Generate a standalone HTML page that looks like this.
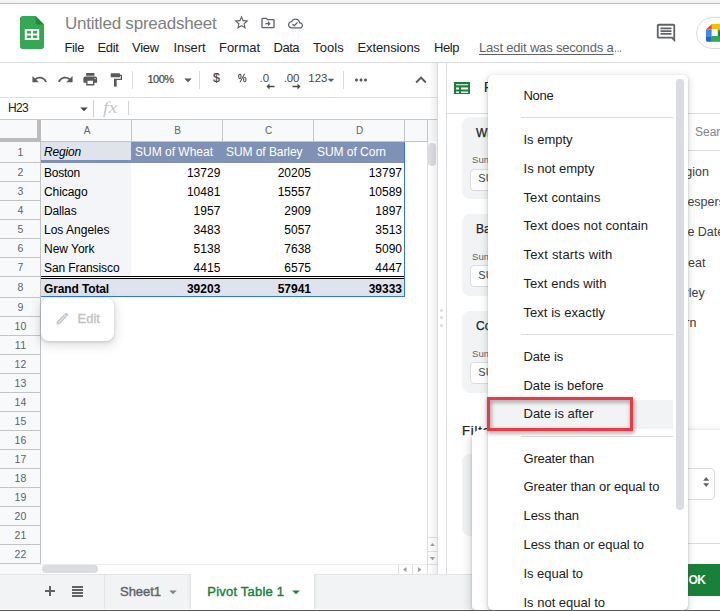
<!DOCTYPE html>
<html>
<head>
<meta charset="utf-8">
<title>Untitled spreadsheet</title>
<style>
*{box-sizing:border-box;margin:0;padding:0}
html,body{width:720px;height:611px;overflow:hidden;background:#fff}
body{position:relative;font-family:"Liberation Sans",sans-serif;color:#202124}
.abs{position:absolute}
.t{position:absolute;white-space:nowrap;line-height:1}
</style>
</head>
<body>
<!-- header -->
<div class="abs" style="left:0px;top:0px;width:720px;height:3px;background:#f5f5f5;"></div>
<div class="abs" style="left:0px;top:3px;width:720px;height:1px;background:#c2c2c2;"></div>
<svg class="abs" style="left:20px;top:16px" width="24" height="33" viewBox="0 0 24 33">
<path d="M2.500 0H15.600L24 8.600V30.500c0 1.400-1.100 2.500-2.500 2.500h-19C1.100 33 0 31.900 0 30.500v-28C0 1.100 1.100 0 2.500 0z" fill="#34a853"/>
<path d="M15.600 0L24 8.600h-6.400c-1.100 0-2-.9-2-2z" fill="#1e8e3e"/>
<path d="M4.800 13v11h14.400V13zm2 2h4.300v2.600H6.800zm6.100 0h4.300v2.600h-4.300zm-6.100 4.400h4.300V22H6.800zm6.100 0h4.300V22h-4.300z" fill="#fff"/>
</svg>
<div class="t" style="left:65px;top:14.5px;font-size:17px;color:#808080;letter-spacing:-0.222px;">Untitled spreadsheet</div>
<svg class="abs" style="left:232.8px;top:14.2px;" width="17" height="17" viewBox="0 0 24 24"><path fill="#5f6368" d="M22 9.24l-7.19-.62L12 2 9.19 8.63 2 9.24l5.46 4.73L5.82 21 12 17.27 18.18 21l-1.63-7.03L22 9.24zM12 15.4l-3.76 2.27 1-4.28-3.32-2.88 4.38-.38L12 6.1l1.71 4.04 4.38.38-3.32 2.88 1 4.28L12 15.4z"/></svg>
<svg class="abs" style="left:260px;top:14.5px;" width="16" height="16" viewBox="0 0 24 24"><path fill="#5f6368" d="M20 6h-8l-2-2H4c-1.1 0-2 .9-2 2v12c0 1.1.9 2 2 2h16c1.1 0 2-.9 2-2V8c0-1.1-.9-2-2-2zm0 12H4V6h5.17l2 2H20v10zm-8-1l4-4-4-4v3H8v2h4v3z"/></svg>
<svg class="abs" style="left:287.5px;top:15.5px;" width="15" height="15" viewBox="0 0 24 24"><path fill="#5f6368" d="M19.35 10.04C18.67 6.59 15.64 4 12 4 9.11 4 6.6 5.64 5.35 8.04 2.34 8.36 0 10.91 0 14c0 3.31 2.69 6 6 6h13c2.76 0 5-2.24 5-5 0-2.64-2.05-4.78-4.65-4.96zM19 18H6c-2.21 0-4-1.79-4-4 0-2.05 1.53-3.76 3.56-3.97l1.07-.11.5-.95C8.08 7.14 9.94 6 12 6c2.62 0 4.88 1.86 5.39 4.43l.3 1.5 1.53.11c1.56.1 2.78 1.41 2.78 2.96 0 1.65-1.35 3-3 3zm-9-3.82l-2.09-2.09L6.5 13.5 10 17l6.01-6.01-1.41-1.41z"/></svg>
<div class="t" style="left:64.5px;top:40.7px;font-size:13px;color:#202124;letter-spacing:-0.362px;">File</div>
<div class="t" style="left:97.5px;top:40.7px;font-size:13px;color:#202124;letter-spacing:-0.350px;">Edit</div>
<div class="t" style="left:132px;top:40.7px;font-size:13px;color:#202124;letter-spacing:-0.236px;">View</div>
<div class="t" style="left:173.5px;top:40.7px;font-size:13px;color:#202124;letter-spacing:-0.085px;">Insert</div>
<div class="t" style="left:219px;top:40.7px;font-size:13px;color:#202124;letter-spacing:-0.029px;">Format</div>
<div class="t" style="left:273.5px;top:40.7px;font-size:13px;color:#202124;letter-spacing:-0.490px;">Data</div>
<div class="t" style="left:313px;top:40.7px;font-size:13px;color:#202124;letter-spacing:0.130px;">Tools</div>
<div class="t" style="left:357.5px;top:40.7px;font-size:13px;color:#202124;letter-spacing:-0.109px;">Extensions</div>
<div class="t" style="left:434px;top:40.7px;font-size:13px;color:#202124;letter-spacing:-0.434px;">Help</div>
<div class="t" style="left:479px;top:40.7px;font-size:13px;color:#5f6368;letter-spacing:-0.185px;text-decoration:underline;text-decoration-thickness:1px;text-underline-offset:2px;">Last edit was seconds a</div>
<div class="t" style="left:613.5px;top:40.7px;font-size:13px;color:#5f6368;transform:scaleX(.62);transform-origin:left;">…</div>
<svg class="abs" style="left:655px;top:21.5px;" width="22" height="22" viewBox="0 0 24 24"><path fill="#5f6368" d="M21.99 4c0-1.1-.89-2-1.99-2H4c-1.1 0-2 .9-2 2v12c0 1.1.9 2 2 2h14l4 4-.01-18zM20 4v13.17L18.83 16H4V4h16zM6 12h12v2H6zm0-3h12v2H6zm0-3h12v2H6z"/></svg>
<div class="abs" style="left:696px;top:17px;width:60px;height:32px;border:1px solid #dadce0;border-radius:16px;background:#fff"></div>
<svg class="abs" style="left:706px;top:24px" width="14" height="18" viewBox="0 0 14 18">
<path d="M5.800 0L0 5.500h5.800z" fill="#ea4335"/>
<path d="M5.800 0H14v5.500H5.800z" fill="#fbbc04"/>
<path d="M0 5.500h5.800v6.700H0z" fill="#4285f4"/>
<path d="M0 12.200h5.800v5.600H1.500C.7 17.800 0 17.100 0 16.300z" fill="#1967d2"/>
<path d="M5.800 12H14v5.800H5.800z" fill="#34a853"/>
<path d="M11.500 5.500H14V12h-2.500z" fill="#34a853"/>
<path d="M5.800 5.500h5.700V12H5.800z" fill="#fff"/>
<path d="M12.500 8.300L14 7v5h-1.500z" fill="#188038"/>
</svg>
<div class="abs" style="left:0px;top:62px;width:720px;height:1px;background:#dadce0;"></div>
<!-- toolbar -->
<svg class="abs" style="left:30.6px;top:71px;" width="17" height="17" viewBox="0 0 24 24"><path fill="#585a5c" d="M12.5 8c-2.65 0-5.05.99-6.9 2.6L2 7v9h9l-3.62-3.62c1.39-1.16 3.16-1.88 5.12-1.88 3.54 0 6.55 2.31 7.6 5.5l2.37-.78C21.08 11.03 17.15 8 12.5 8z"/></svg>
<svg class="abs" style="left:56.8px;top:71px;" width="17" height="17" viewBox="0 0 24 24"><path fill="#585a5c" d="M18.4 10.6C16.55 8.99 14.15 8 11.5 8c-4.65 0-8.58 3.03-9.96 7.22L3.9 16c1.05-3.19 4.05-5.5 7.6-5.5 1.95 0 3.73.72 5.12 1.88L13 16h9V7l-3.6 3.6z"/></svg>
<svg class="abs" style="left:82.2px;top:71px;" width="16.5" height="16.5" viewBox="0 0 24 24"><path fill="#585a5c" d="M19 8H5c-1.66 0-3 1.34-3 3v6h4v4h12v-4h4v-6c0-1.66-1.34-3-3-3zm-3 11H8v-5h8v5zm3-7c-.55 0-1-.45-1-1s.45-1 1-1 1 .45 1 1-.45 1-1 1zm-1-9H6v4h12V3z"/></svg>
<svg class="abs" style="left:108px;top:71.5px;" width="16" height="16" viewBox="0 0 24 24"><path fill="#585a5c" d="M18 4V3c0-.55-.45-1-1-1H5c-.55 0-1 .45-1 1v4c0 .55.45 1 1 1h12c.55 0 1-.45 1-1V6h1v4H9v11c0 .55.45 1 1 1h2c.55 0 1-.45 1-1v-9h8V4h-3z"/></svg>
<div class="abs" style="left:132px;top:71px;width:1px;height:18px;background:#dadce0;"></div>
<div class="t" style="left:147.5px;top:73.7px;font-size:11px;color:#444746;letter-spacing:-0.533px;-webkit-text-stroke:.2px #444746;">100%</div>
<svg class="abs" style="left:179px;top:71px;" width="18" height="18" viewBox="0 0 24 24"><path fill="#585a5c" d="M7 10l5 5 5-5z"/></svg>
<div class="abs" style="left:199px;top:71px;width:1px;height:18px;background:#dadce0;"></div>
<div class="t" style="left:213px;top:72.35px;font-size:12.5px;color:#444746;-webkit-text-stroke:.2px #444746;">$</div>
<div class="t" style="left:237.5px;top:73.05px;font-size:11.5px;color:#444746;transform:scaleX(.84);transform-origin:left;-webkit-text-stroke:.3px #444746;">%</div>
<div class="t" style="left:259.5px;top:73.25px;font-size:11.5px;color:#444746;letter-spacing:-0.045px;">.0</div>
<svg class="abs" style="left:265.500px;top:82.500px" width="9" height="7" viewBox="0 0 9 7"><path d="M3.500 0.500L0.500 3.500l3 3V4.200h5V2.800h-5z" fill="#444746"/></svg>
<div class="t" style="left:283.7px;top:73.25px;font-size:11.5px;color:#444746;letter-spacing:-0.162px;">.00</div>
<svg class="abs" style="left:292.300px;top:82.500px" width="9" height="7" viewBox="0 0 9 7"><path d="M5.500 0.500L8.500 3.500l-3 3V4.200h-5V2.800h5z" fill="#444746"/></svg>
<div class="t" style="left:308.3px;top:73.35px;font-size:11.5px;color:#444746;letter-spacing:-0.062px;">123</div>
<svg class="abs" style="left:323.3px;top:71.5px;" width="16" height="16" viewBox="0 0 24 24"><path fill="#585a5c" d="M7 10l5 5 5-5z"/></svg>
<div class="abs" style="left:343px;top:71px;width:1px;height:18px;background:#dadce0;"></div>
<svg class="abs" style="left:352px;top:70.8px;" width="18" height="18" viewBox="0 0 24 24"><path fill="#585a5c" d="M6 10c-1.1 0-2 .9-2 2s.9 2 2 2 2-.9 2-2-.9-2-2-2zm12 0c-1.1 0-2 .9-2 2s.9 2 2 2 2-.9 2-2-.9-2-2-2zm-6 0c-1.1 0-2 .9-2 2s.9 2 2 2 2-.9 2-2-.9-2-2-2z"/></svg>
<svg class="abs" style="left:409.5px;top:69.1px;" width="22" height="22" viewBox="0 0 24 24"><path fill="#585a5c" d="M12 8l-6 6 1.41 1.41L12 10.83l4.59 4.58L18 14z"/></svg>
<div class="abs" style="left:0px;top:97px;width:437px;height:1px;background:#e0e0e0;"></div>
<div class="abs" style="left:437px;top:63px;width:1px;height:511px;background:#dcdcdc;"></div>
<div class="t" style="left:8px;top:101.6px;font-size:12px;color:#202124;letter-spacing:-0.671px;">H23</div>
<svg class="abs" style="left:75px;top:100px;" width="18" height="18" viewBox="0 0 24 24"><path fill="#444746" d="M7 10l5 5 5-5z"/></svg>
<div class="abs" style="left:93px;top:100px;width:1px;height:17px;background:#d0d0d0;"></div>
<div class="t" style="left:103px;top:99.500px;font-family:'Liberation Serif',serif;font-style:italic;font-size:16.500px;color:#c6c8ca;transform:scaleX(1.22);transform-origin:left">fx</div>
<div class="abs" style="left:128px;top:101px;width:1px;height:14px;background:#d4d4d4;"></div>
<div class="abs" style="left:0px;top:119px;width:437px;height:1px;background:#c4c7c5;"></div>
<!-- grid -->
<div class="abs" style="left:0px;top:120px;width:436px;height:454px;background:#fff;"></div>
<div class="abs" style="left:0px;top:120px;width:437px;height:21px;background:#f8f9fa;"></div>
<div class="abs" style="left:0px;top:141px;width:428px;height:1px;background:#c4c4c4;"></div>
<div class="abs" style="left:131px;top:120px;width:1px;height:21px;background:#c4c4c4;"></div>
<div class="t" style="left:83.765px;top:126.1px;font-size:10px;color:#5f6368;">A</div>
<div class="abs" style="left:222px;top:120px;width:1px;height:21px;background:#c4c4c4;"></div>
<div class="t" style="left:174.265px;top:126.1px;font-size:10px;color:#5f6368;">B</div>
<div class="abs" style="left:313px;top:120px;width:1px;height:21px;background:#c4c4c4;"></div>
<div class="t" style="left:264.989px;top:126.1px;font-size:10px;color:#5f6368;">C</div>
<div class="abs" style="left:404px;top:120px;width:1px;height:21px;background:#c4c4c4;"></div>
<div class="t" style="left:355.989px;top:126.1px;font-size:10px;color:#5f6368;">D</div>
<div class="abs" style="left:427px;top:120px;width:1px;height:21px;background:#c4c4c4;"></div>
<div class="abs" style="left:37px;top:120px;width:4px;height:22px;background:#bcbcbc;"></div>
<div class="abs" style="left:0px;top:138px;width:41px;height:4px;background:#bcbcbc;"></div>
<div class="abs" style="left:0px;top:142px;width:40px;height:421px;background:#f8f9fa;"></div>
<div class="abs" style="left:40px;top:142px;width:1px;height:432px;background:#c4c4c4;"></div>
<div class="abs" style="left:0px;top:162px;width:40px;height:1px;background:#c4c4c4;"></div>
<div class="t" style="left:17.5802px;top:147.25px;font-size:10.5px;color:#5f6368;letter-spacing:.3px;">1</div>
<div class="abs" style="left:0px;top:181px;width:40px;height:1px;background:#c4c4c4;"></div>
<div class="t" style="left:17.5802px;top:167.25px;font-size:10.5px;color:#5f6368;letter-spacing:.3px;">2</div>
<div class="abs" style="left:0px;top:200px;width:40px;height:1px;background:#c4c4c4;"></div>
<div class="t" style="left:17.5802px;top:186.25px;font-size:10.5px;color:#5f6368;letter-spacing:.3px;">3</div>
<div class="abs" style="left:0px;top:219px;width:40px;height:1px;background:#c4c4c4;"></div>
<div class="t" style="left:17.5802px;top:205.25px;font-size:10.5px;color:#5f6368;letter-spacing:.3px;">4</div>
<div class="abs" style="left:0px;top:238px;width:40px;height:1px;background:#c4c4c4;"></div>
<div class="t" style="left:17.5802px;top:224.25px;font-size:10.5px;color:#5f6368;letter-spacing:.3px;">5</div>
<div class="abs" style="left:0px;top:257px;width:40px;height:1px;background:#c4c4c4;"></div>
<div class="t" style="left:17.5802px;top:243.25px;font-size:10.5px;color:#5f6368;letter-spacing:.3px;">6</div>
<div class="abs" style="left:0px;top:276px;width:40px;height:1px;background:#c4c4c4;"></div>
<div class="t" style="left:17.5802px;top:262.25px;font-size:10.5px;color:#5f6368;letter-spacing:.3px;">7</div>
<div class="abs" style="left:0px;top:297px;width:40px;height:1px;background:#c4c4c4;"></div>
<div class="t" style="left:17.5802px;top:282.25px;font-size:10.5px;color:#5f6368;letter-spacing:.3px;">8</div>
<div class="abs" style="left:0px;top:316px;width:40px;height:1px;background:#c4c4c4;"></div>
<div class="t" style="left:17.5802px;top:302.25px;font-size:10.5px;color:#5f6368;letter-spacing:.3px;">9</div>
<div class="abs" style="left:0px;top:335px;width:40px;height:1px;background:#c4c4c4;"></div>
<div class="t" style="left:14.4604px;top:321.25px;font-size:10.5px;color:#5f6368;letter-spacing:.3px;">10</div>
<div class="abs" style="left:0px;top:354px;width:40px;height:1px;background:#c4c4c4;"></div>
<div class="t" style="left:14.85px;top:340.25px;font-size:10.5px;color:#5f6368;letter-spacing:.3px;">11</div>
<div class="abs" style="left:0px;top:373px;width:40px;height:1px;background:#c4c4c4;"></div>
<div class="t" style="left:14.4604px;top:359.25px;font-size:10.5px;color:#5f6368;letter-spacing:.3px;">12</div>
<div class="abs" style="left:0px;top:392px;width:40px;height:1px;background:#c4c4c4;"></div>
<div class="t" style="left:14.4604px;top:378.25px;font-size:10.5px;color:#5f6368;letter-spacing:.3px;">13</div>
<div class="abs" style="left:0px;top:411px;width:40px;height:1px;background:#c4c4c4;"></div>
<div class="t" style="left:14.4604px;top:397.25px;font-size:10.5px;color:#5f6368;letter-spacing:.3px;">14</div>
<div class="abs" style="left:0px;top:430px;width:40px;height:1px;background:#c4c4c4;"></div>
<div class="t" style="left:14.4604px;top:416.25px;font-size:10.5px;color:#5f6368;letter-spacing:.3px;">15</div>
<div class="abs" style="left:0px;top:449px;width:40px;height:1px;background:#c4c4c4;"></div>
<div class="t" style="left:14.4604px;top:435.25px;font-size:10.5px;color:#5f6368;letter-spacing:.3px;">16</div>
<div class="abs" style="left:0px;top:468px;width:40px;height:1px;background:#c4c4c4;"></div>
<div class="t" style="left:14.4604px;top:454.25px;font-size:10.5px;color:#5f6368;letter-spacing:.3px;">17</div>
<div class="abs" style="left:0px;top:487px;width:40px;height:1px;background:#c4c4c4;"></div>
<div class="t" style="left:14.4604px;top:473.25px;font-size:10.5px;color:#5f6368;letter-spacing:.3px;">18</div>
<div class="abs" style="left:0px;top:506px;width:40px;height:1px;background:#c4c4c4;"></div>
<div class="t" style="left:14.4604px;top:492.25px;font-size:10.5px;color:#5f6368;letter-spacing:.3px;">19</div>
<div class="abs" style="left:0px;top:525px;width:40px;height:1px;background:#c4c4c4;"></div>
<div class="t" style="left:14.4604px;top:511.25px;font-size:10.5px;color:#5f6368;letter-spacing:.3px;">20</div>
<div class="abs" style="left:0px;top:544px;width:40px;height:1px;background:#c4c4c4;"></div>
<div class="t" style="left:14.4604px;top:530.25px;font-size:10.5px;color:#5f6368;letter-spacing:.3px;">21</div>
<div class="abs" style="left:0px;top:563px;width:40px;height:1px;background:#c4c4c4;"></div>
<div class="t" style="left:14.4604px;top:549.25px;font-size:10.5px;color:#5f6368;letter-spacing:.3px;">22</div>
<div class="abs" style="left:0px;top:564px;width:41px;height:10px;background:#f8f9fa;"></div>
<div class="abs" style="left:0px;top:563px;width:41px;height:1px;background:#c4c4c4;"></div>
<div class="abs" style="left:41px;top:142px;width:90px;height:21px;background:#dfe3ec;"></div>
<div class="abs" style="left:41px;top:160px;width:90px;height:2.5px;background:#7d90b8;"></div>
<div class="abs" style="left:131px;top:142px;width:273px;height:21px;background:#7f92b6;"></div>
<div class="t" style="left:44px;top:146.3px;font-size:12px;color:#000;font-style:italic;letter-spacing:-0.171px;">Region</div>
<div class="t" style="left:135px;top:146.3px;font-size:12px;color:#fff;letter-spacing:-0.002px;">SUM of Wheat</div>
<div class="t" style="left:226px;top:146.3px;font-size:12px;color:#fff;letter-spacing:-0.066px;">SUM of Barley</div>
<div class="t" style="left:317px;top:146.3px;font-size:12px;color:#fff;letter-spacing:-0.032px;">SUM of Corn</div>
<div class="abs" style="left:41px;top:163px;width:90px;height:113px;background:#f4f5f8;"></div>
<div class="t" style="left:44px;top:166.6px;font-size:12px;color:#000;letter-spacing:-0.227px;">Boston</div>
<div class="t" style="right:499.7px;top:166.6px;font-size:12px;color:#000;">13729</div>
<div class="t" style="right:409px;top:166.6px;font-size:12px;color:#000;">20205</div>
<div class="t" style="right:318px;top:166.6px;font-size:12px;color:#000;">13797</div>
<div class="t" style="left:44px;top:185.6px;font-size:12px;color:#000;letter-spacing:-0.075px;">Chicago</div>
<div class="t" style="right:499.7px;top:185.6px;font-size:12px;color:#000;">10481</div>
<div class="t" style="right:409px;top:185.6px;font-size:12px;color:#000;">15557</div>
<div class="t" style="right:318px;top:185.6px;font-size:12px;color:#000;">10589</div>
<div class="t" style="left:44px;top:204.6px;font-size:12px;color:#000;letter-spacing:-0.141px;">Dallas</div>
<div class="t" style="right:499.7px;top:204.6px;font-size:12px;color:#000;">1957</div>
<div class="t" style="right:409px;top:204.6px;font-size:12px;color:#000;">2909</div>
<div class="t" style="right:318px;top:204.6px;font-size:12px;color:#000;">1897</div>
<div class="t" style="left:44px;top:223.6px;font-size:12px;color:#000;letter-spacing:0.010px;">Los Angeles</div>
<div class="t" style="right:499.7px;top:223.6px;font-size:12px;color:#000;">3483</div>
<div class="t" style="right:409px;top:223.6px;font-size:12px;color:#000;">5057</div>
<div class="t" style="right:318px;top:223.6px;font-size:12px;color:#000;">3513</div>
<div class="t" style="left:44px;top:242.6px;font-size:12px;color:#000;letter-spacing:-0.024px;">New York</div>
<div class="t" style="right:499.7px;top:242.6px;font-size:12px;color:#000;">5138</div>
<div class="t" style="right:409px;top:242.6px;font-size:12px;color:#000;">7638</div>
<div class="t" style="right:318px;top:242.6px;font-size:12px;color:#000;">5090</div>
<div class="t" style="left:44px;top:261.6px;font-size:12px;color:#000;letter-spacing:-0.092px;">San Fransisco</div>
<div class="t" style="right:499.7px;top:261.6px;font-size:12px;color:#000;">4415</div>
<div class="t" style="right:409px;top:261.6px;font-size:12px;color:#000;">6575</div>
<div class="t" style="right:318px;top:261.6px;font-size:12px;color:#000;">4447</div>
<div class="abs" style="left:41px;top:279px;width:363px;height:18px;background:#dfe3ee;"></div>
<div class="abs" style="left:41px;top:276px;width:363px;height:1.3px;background:#000;"></div>
<div class="abs" style="left:41px;top:277.3px;width:363px;height:1px;background:#fff;"></div>
<div class="abs" style="left:41px;top:278.2px;width:363px;height:1.3px;background:#000;"></div>
<div class="t" style="left:44px;top:282.9px;font-size:12px;color:#000;font-weight:bold;letter-spacing:-0.131px;">Grand Total</div>
<div class="t" style="right:499.7px;top:282.9px;font-size:12px;color:#000;font-weight:bold;">39203</div>
<div class="t" style="right:409px;top:282.9px;font-size:12px;color:#000;font-weight:bold;">57941</div>
<div class="t" style="right:318px;top:282.9px;font-size:12px;color:#000;font-weight:bold;">39333</div>
<div class="abs" style="left:404px;top:142px;width:1.3px;height:155px;background:#2f76e8;"></div>
<div class="abs" style="left:41px;top:296px;width:364px;height:1.3px;background:#2f76e8;"></div>
<div class="abs" style="left:41px;top:298px;width:73px;height:43px;border-radius:8px;background:#fff;box-shadow:0 1px 3px rgba(60,64,67,.22),0 3px 8px 3px rgba(60,64,67,.13)"></div>
<svg class="abs" style="left:54.5px;top:311px;stroke:#c2c4c6;stroke-width:.6;" width="15" height="15" viewBox="0 0 24 24"><path fill="#c2c4c6" d="M14.06 9.02l.92.92L5.92 19H5v-.92l9.06-9.06M17.66 3c-.25 0-.51.1-.7.29l-1.83 1.83 3.75 3.75 1.83-1.83c.39-.39.39-1.02 0-1.41l-2.34-2.34c-.2-.2-.45-.29-.71-.29zm-3.6 3.19L3 17.25V21h3.75L17.81 9.94l-3.75-3.75z"/></svg>
<div class="t" style="left:77.5px;top:312px;font-size:13px;color:#c0c2c4;letter-spacing:0.025px;-webkit-text-stroke:.35px #c0c2c4;">Edit</div>
<div class="abs" style="left:427px;top:142px;width:1px;height:432px;background:#e0e0e0;"></div>
<div class="abs" style="left:428px;top:142px;width:9px;height:432px;background:#fff;"></div>
<div class="abs" style="left:428.200px;top:142.800px;width:7.500px;height:23px;border-radius:3.750px;background:#dadce0"></div>
<div class="abs" style="left:427px;top:537px;width:10px;height:1px;background:#e0e0e0;"></div>
<div class="abs" style="left:427px;top:551px;width:10px;height:1px;background:#e0e0e0;"></div>
<div class="abs" style="left:427px;top:564px;width:10px;height:1px;background:#e0e0e0;"></div>
<svg class="abs" style="left:429.700px;top:542.500px" width="5" height="3.300" viewBox="0 0 6 4"><path d="M0 4l3-4 3 4z" fill="#a0a0a0"/></svg>
<svg class="abs" style="left:429.700px;top:556.700px" width="5" height="3.300" viewBox="0 0 6 4"><path d="M0 0l3 4 3-4z" fill="#a0a0a0"/></svg>
<div class="abs" style="left:41px;top:564px;width:386px;height:1px;background:#ececec;"></div>
<div class="abs" style="left:42px;top:565px;width:56px;height:8px;border-radius:4px;background:#dadce0"></div>
<div class="abs" style="left:398px;top:564px;width:1px;height:10px;background:#e0e0e0;"></div>
<div class="abs" style="left:412px;top:564px;width:1px;height:10px;background:#e0e0e0;"></div>
<svg class="abs" style="left:403px;top:566.500px" width="3.500" height="5.200" viewBox="0 0 4 6"><path d="M4 0L0 3l4 3z" fill="#a0a0a0"/></svg>
<svg class="abs" style="left:417.500px;top:566.500px" width="3.500" height="5.200" viewBox="0 0 4 6"><path d="M0 0l4 3-4 3z" fill="#a0a0a0"/></svg>
<!-- bottom bar -->
<div class="abs" style="left:429px;top:63px;width:8px;height:511px;background:linear-gradient(to right,rgba(0,0,0,0),rgba(0,0,0,.07))"></div>
<div class="abs" style="left:0px;top:574px;width:720px;height:35px;background:#f1f3f4;"></div>
<div class="abs" style="left:0px;top:574px;width:720px;height:1px;background:#e3e5e8;"></div>
<div class="abs" style="left:0px;top:608.7px;width:720px;height:1.1px;background:#fafbfb;"></div>
<div class="abs" style="left:45px;top:590.1px;width:9.5px;height:1.8px;background:#5f6368;"></div>
<div class="abs" style="left:48.85px;top:586.25px;width:1.8px;height:9.5px;background:#5f6368;"></div>
<div class="abs" style="left:72.3px;top:586.2px;width:11px;height:1.7px;background:#5f6368;"></div>
<div class="abs" style="left:72.3px;top:589.1px;width:11px;height:1.7px;background:#5f6368;"></div>
<div class="abs" style="left:72.3px;top:592px;width:11px;height:1.7px;background:#5f6368;"></div>
<div class="abs" style="left:72.3px;top:594.9px;width:11px;height:1.7px;background:#5f6368;"></div>
<div class="abs" style="left:104px;top:575px;width:1px;height:34px;background:#e3e5e8;"></div>
<div class="t" style="left:120px;top:585.3px;font-size:13px;color:#5f6368;letter-spacing:-0.034px;-webkit-text-stroke:.4px #5f6368;">Sheet1</div>
<svg class="abs" style="left:163.5px;top:583px;" width="18" height="18" viewBox="0 0 24 24"><path fill="#80868b" d="M7 10l5 5 5-5z"/></svg>
<div class="abs" style="left:191px;top:574px;width:123px;height:35px;background:#fff;box-shadow:0 0 3px rgba(60,64,67,.22);clip-path:inset(0 -6px 0 -6px)"></div>
<div class="t" style="left:207.3px;top:585.3px;font-size:13px;color:#188038;letter-spacing:0.216px;-webkit-text-stroke:.4px #188038;">Pivot Table 1</div>
<svg class="abs" style="left:287px;top:583px;" width="18" height="18" viewBox="0 0 24 24"><path fill="#188038" d="M7 10l5 5 5-5z"/></svg>
<!-- side panel -->
<div class="abs" style="left:438px;top:63px;width:8px;height:511px;background:#fff;"></div>
<div class="abs" style="left:439.900px;top:309.3px;width:3px;height:3px;border-radius:50%;background:#dadce0"></div>
<div class="abs" style="left:439.900px;top:316.4px;width:3px;height:3px;border-radius:50%;background:#dadce0"></div>
<div class="abs" style="left:439.900px;top:323.5px;width:3px;height:3px;border-radius:50%;background:#dadce0"></div>
<div class="abs" style="left:446px;top:63px;width:1px;height:511px;background:#dadce0;"></div>
<div class="abs" style="left:447px;top:63px;width:273px;height:511px;background:#fff;"></div>
<svg class="abs" style="left:453.900px;top:81.500px" width="16.300" height="12.800" viewBox="0 0 16.300 12.800">
<path d="M0 0h16.300v12.800H0z" fill="#188038"/>
<path d="M2 2.200h12.100v1.100H2zM2 5.500h3.100v2H2zm5.100 0h7v2h-7zM2 9.400h3.100v1.700H2zm5.100 0h7v1.700h-7z" fill="#fff"/>
</svg>
<div class="t" style="left:483.7px;top:79.2px;font-size:15px;color:#202124;">Pivot table editor</div>
<div class="abs" style="left:447px;top:113px;width:273px;height:1px;background:#dadce0;"></div>
<div class="abs" style="left:688px;top:150px;width:32px;height:1px;background:#dadce0;"></div>
<div class="t" style="left:695px;top:125.5px;font-size:12px;color:#80868b;">Search</div>
<div class="abs" style="left:688px;top:150px;width:32px;height:270px;overflow:hidden">
<div class="t" style="left:-18.7px;top:15.6187px;font-size:12.5px;color:#3c4043;">Region</div>
<div class="t" style="left:-18.7px;top:45.9188px;font-size:12.5px;color:#3c4043;">Salesperson</div>
<div class="t" style="left:-18.7px;top:76.3188px;font-size:12.5px;color:#3c4043;">Sale Date</div>
<div class="t" style="left:-18.7px;top:106.619px;font-size:12.5px;color:#3c4043;">Wheat</div>
<div class="t" style="left:-18.7px;top:137.019px;font-size:12.5px;color:#3c4043;">Barley</div>
<div class="t" style="left:-18.7px;top:167.319px;font-size:12.5px;color:#3c4043;">Corn</div>
</div>
<div class="abs" style="left:462px;top:117.4px;width:215px;height:82px;border-radius:8px;background:#f1f3f4"></div>
<div class="t" style="left:476px;top:126.5px;font-size:12px;color:#202124;-webkit-text-stroke:.25px #202124;">Wheat</div>
<div class="t" style="left:472px;top:155px;font-size:9.6px;color:#5f6368;">Summarize by</div>
<div class="abs" style="left:470.300px;top:168.6px;width:90px;height:22px;border-radius:4px;background:#fff;border:1px solid #dadce0"></div>
<div class="t" style="left:478.3px;top:172.8px;font-size:11px;color:#444746;">SUM</div>
<div class="abs" style="left:462px;top:214.2px;width:215px;height:82px;border-radius:8px;background:#f1f3f4"></div>
<div class="t" style="left:476px;top:222.6px;font-size:12px;color:#202124;-webkit-text-stroke:.25px #202124;">Barley</div>
<div class="t" style="left:472px;top:251.8px;font-size:9.6px;color:#5f6368;">Summarize by</div>
<div class="abs" style="left:470.300px;top:265.4px;width:90px;height:22px;border-radius:4px;background:#fff;border:1px solid #dadce0"></div>
<div class="t" style="left:478.3px;top:269.6px;font-size:11px;color:#444746;">SUM</div>
<div class="abs" style="left:462px;top:311.2px;width:215px;height:82px;border-radius:8px;background:#f1f3f4"></div>
<div class="t" style="left:476px;top:319.6px;font-size:12px;color:#202124;-webkit-text-stroke:.25px #202124;">Corn</div>
<div class="t" style="left:472px;top:348.8px;font-size:9.6px;color:#5f6368;">Summarize by</div>
<div class="abs" style="left:470.300px;top:362.4px;width:90px;height:22px;border-radius:4px;background:#fff;border:1px solid #dadce0"></div>
<div class="t" style="left:478.3px;top:366.6px;font-size:11px;color:#444746;">SUM</div>
<div class="t" style="left:462px;top:423.7px;font-size:13px;color:#202124;letter-spacing:0.873px;-webkit-text-stroke:.25px #202124;">Filters</div>
<div class="abs" style="left:462px;top:453.700px;width:215px;height:82.500px;border-radius:8px;background:#f1f3f4"></div>
<!-- filter popup -->
<div class="abs" style="left:471.500px;top:430px;width:260px;height:179.500px;border-radius:8px 0 0 4px;background:#fff;box-shadow:0 1px 3px rgba(60,64,67,.3),0 4px 8px 3px rgba(60,64,67,.15)"></div>
<div class="abs" style="left:600px;top:468.300px;width:115px;height:31.800px;border-radius:4px;background:#fff;border:1px solid #dadce0"></div>
<svg class="abs" style="left:702.800px;top:476.500px" width="6.400" height="10" viewBox="0 0 8 13"><path d="M0 5l4-5 4 5zM0 8l4 5 4-5z" fill="#5f6368"/></svg>
<div class="abs" style="left:688px;top:543px;width:32px;height:1px;background:#dadce0;"></div>
<div class="abs" style="left:640px;top:564px;width:90px;height:32px;border-radius:4px;background:#188038"></div>
<div class="t" style="left:688.5px;top:573.8px;font-size:12px;color:#fff;font-weight:bold;letter-spacing:-0.500px;">OK</div>
<!-- menu -->
<div class="abs" style="left:488px;top:75px;width:200px;height:534.500px;border-radius:5px;background:#fff;box-shadow:0 2px 6px 2px rgba(60,64,67,.15),0 1px 2px rgba(60,64,67,.3)"></div>
<div class="abs" style="left:490px;top:400px;width:183px;height:28.5px;background:#f1f3f4;"></div>
<div class="t" style="left:523.5px;top:89px;font-size:13px;color:#202124;letter-spacing:-0.270px;">None</div>
<div class="t" style="left:523.5px;top:132.8px;font-size:13px;color:#202124;letter-spacing:-0.016px;">Is empty</div>
<div class="t" style="left:523.5px;top:161.9px;font-size:13px;color:#202124;letter-spacing:0.016px;">Is not empty</div>
<div class="t" style="left:523.5px;top:191px;font-size:13px;color:#202124;letter-spacing:0.087px;">Text contains</div>
<div class="t" style="left:523.5px;top:219px;font-size:13px;color:#202124;letter-spacing:0.078px;">Text does not contain</div>
<div class="t" style="left:523.5px;top:248px;font-size:13px;color:#202124;letter-spacing:0.190px;">Text starts with</div>
<div class="t" style="left:523.5px;top:276.9px;font-size:13px;color:#202124;letter-spacing:0.045px;">Text ends with</div>
<div class="t" style="left:523.5px;top:305.9px;font-size:13px;color:#202124;letter-spacing:0.039px;">Text is exactly</div>
<div class="t" style="left:523.5px;top:349.9px;font-size:13px;color:#202124;letter-spacing:-0.137px;">Date is</div>
<div class="t" style="left:523.5px;top:378.8px;font-size:13px;color:#202124;letter-spacing:-0.067px;">Date is before</div>
<div class="t" style="left:523.5px;top:406.9px;font-size:13px;color:#202124;letter-spacing:-0.007px;">Date is after</div>
<div class="t" style="left:523.5px;top:451.7px;font-size:13px;color:#202124;letter-spacing:-0.207px;">Greater than</div>
<div class="t" style="left:523.5px;top:480.4px;font-size:13px;color:#202124;letter-spacing:-0.085px;">Greater than or equal to</div>
<div class="t" style="left:523.5px;top:508.9px;font-size:13px;color:#202124;letter-spacing:-0.097px;">Less than</div>
<div class="t" style="left:523.5px;top:537.9px;font-size:13px;color:#202124;letter-spacing:-0.044px;">Less than or equal to</div>
<div class="t" style="left:523.5px;top:566.7px;font-size:13px;color:#202124;letter-spacing:-0.044px;">Is equal to</div>
<div class="t" style="left:523.5px;top:595.8px;font-size:13px;color:#202124;letter-spacing:-0.011px;">Is not equal to</div>
<div class="abs" style="left:521px;top:117px;width:152px;height:1px;background:#dadce0;"></div>
<div class="abs" style="left:521px;top:334px;width:152px;height:1px;background:#dadce0;"></div>
<div class="abs" style="left:521px;top:436px;width:152px;height:1px;background:#dadce0;"></div>
<div class="abs" style="left:676px;top:79px;width:8px;height:431px;border-radius:4px;background:#dadce0"></div>
<div class="abs" style="left:487px;top:397px;width:146px;height:34px;border:3px solid #ec3943;filter:drop-shadow(1.500px 2px 2px rgba(0,0,0,.45))"></div>
<div class="abs" style="left:0px;top:609.8px;width:720px;height:1.3px;background:#5a5a5a;"></div>
</body>
</html>
